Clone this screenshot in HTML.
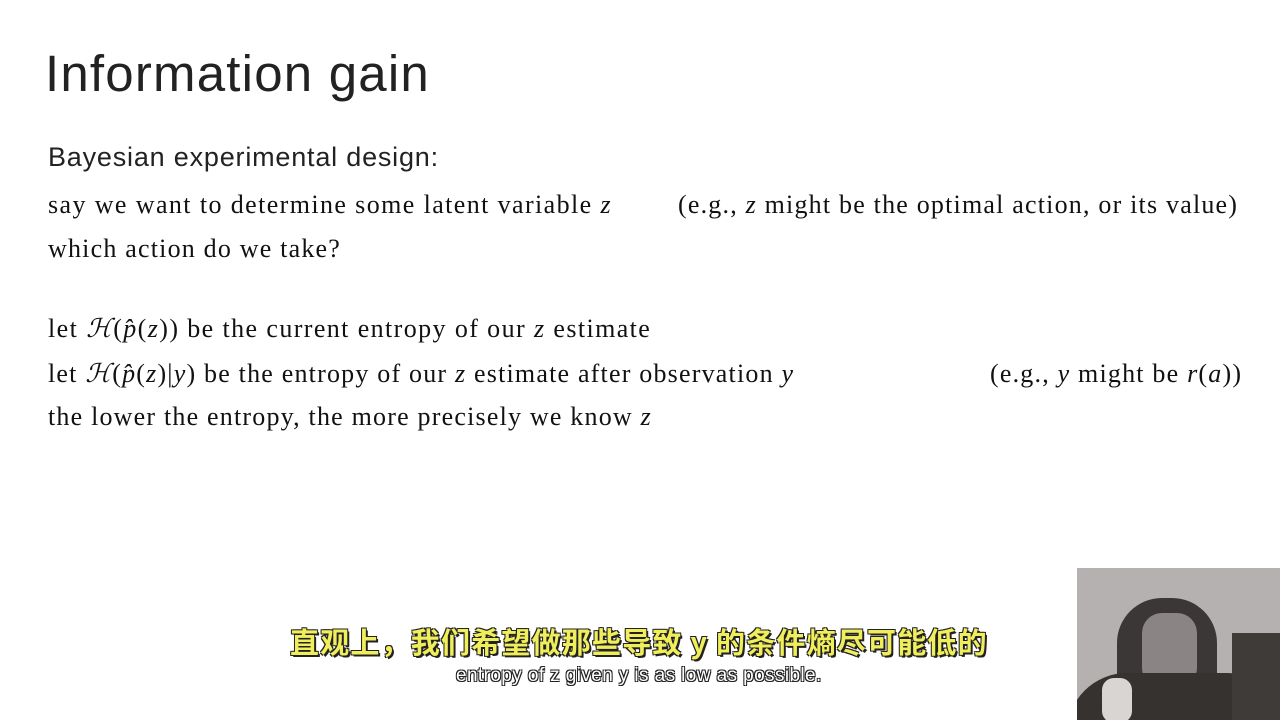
<!DOCTYPE html>
<html><head><meta charset="utf-8"><style>
body{margin:0;width:1280px;height:720px;background:#fff;position:relative;overflow:hidden;font-family:"Liberation Serif",serif;color:#111}
.a{position:absolute;white-space:nowrap}
.s{font-size:26px;letter-spacing:1.2px}
i{font-style:italic}
</style></head><body>
<div class="a" style="left:45px;top:44px;font:51px 'Liberation Sans',sans-serif;color:#222;letter-spacing:1.2px">Information gain</div>
<div class="a" style="left:48px;top:142px;font:27px 'Liberation Sans',sans-serif;color:#222;letter-spacing:0.8px">Bayesian experimental design:</div>
<div class="a s" style="left:48px;top:190px;letter-spacing:1.4px">say we want to determine some latent variable <i>z</i></div>
<div class="a s" style="left:678px;top:190px">(e.g., <i>z</i> might be the optimal action, or its value)</div>
<div class="a s" style="left:48px;top:234px">which action do we take?</div>
<div class="a s" style="left:48px;top:314px;letter-spacing:1.4px">let <i>ℋ</i>(<i>p̂</i>(<i>z</i>)) be the current entropy of our <i>z</i> estimate</div>
<div class="a s" style="left:48px;top:359px">let <i>ℋ</i>(<i>p̂</i>(<i>z</i>)|<i>y</i>) be the entropy of our <i>z</i> estimate after observation <i>y</i></div>
<div class="a s" style="left:990px;top:359px">(e.g., <i>y</i> might be <i>r</i>(<i>a</i>))</div>
<div class="a s" style="left:48px;top:402px">the lower the entropy, the more precisely we know <i>z</i></div>
<div class="a" style="left:1077px;top:568px;width:203px;height:152px;background:#b5b1b0;overflow:hidden">
<div style="position:absolute;left:40px;top:30px;width:100px;height:130px;background:#3a3736;border-radius:45px 45px 0 0"></div>
<div style="position:absolute;left:65px;top:45px;width:55px;height:75px;background:#8a8584;border-radius:20px"></div>
<div style="position:absolute;left:-10px;top:105px;width:220px;height:60px;background:#35322f;border-radius:60px 60px 0 0"></div>
<div style="position:absolute;left:155px;top:65px;width:50px;height:90px;background:#3e3b39"></div>
<div style="position:absolute;left:25px;top:110px;width:30px;height:45px;background:#d8d5d3;border-radius:12px"></div>
</div>
<div class="a" style="left:290px;top:620px;font:bold 29px 'Noto Sans CJK SC',sans-serif;letter-spacing:1.2px;color:#f0ee5a;text-shadow:2px 2px 0 #222,-1px -1px 0 #222,1px -1px 0 #222,-1px 1px 0 #222">直观上，我们希望做那些导致 y 的条件熵尽可能低的</div>
<div class="a" style="left:456px;top:665px;font:19px 'Liberation Sans',sans-serif;color:#fff;letter-spacing:0.4px;text-shadow:1px 1px 0 #222,-1px -1px 0 #222,1px -1px 0 #222,-1px 1px 0 #222">entropy of z given y is as low as possible.</div>
</body></html>
